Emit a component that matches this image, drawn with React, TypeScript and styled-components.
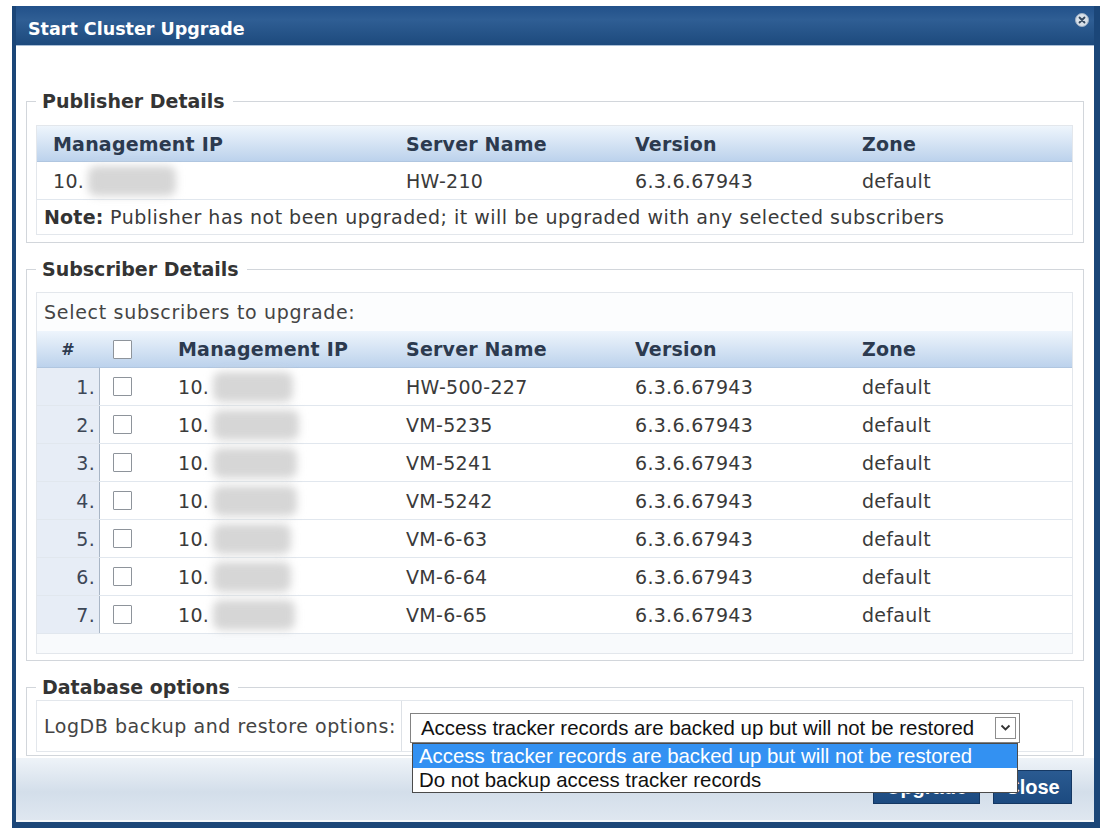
import React from 'react'
import styled, { createGlobalStyle } from 'styled-components'

const GlobalStyle = createGlobalStyle`
	body {
		margin: 0;
		background: #fff;
		font-family: "DejaVu Sans", Verdana, sans-serif;
	}
	* { box-sizing: border-box; }
`

type Subscriber = { ip: string, blur: number, name: string, version: string, zone: string }

const subscribers: Subscriber[] = [
	{ ip: '10.', blur: 80, name: 'HW-500-227', version: '6.3.6.67943', zone: 'default' },
	{ ip: '10.', blur: 86, name: 'VM-5235', version: '6.3.6.67943', zone: 'default' },
	{ ip: '10.', blur: 84, name: 'VM-5241', version: '6.3.6.67943', zone: 'default' },
	{ ip: '10.', blur: 84, name: 'VM-5242', version: '6.3.6.67943', zone: 'default' },
	{ ip: '10.', blur: 78, name: 'VM-6-63', version: '6.3.6.67943', zone: 'default' },
	{ ip: '10.', blur: 78, name: 'VM-6-64', version: '6.3.6.67943', zone: 'default' },
	{ ip: '10.', blur: 82, name: 'VM-6-65', version: '6.3.6.67943', zone: 'default' },
]

const CloseIcon = () => (
	<svg width="14" height="14" viewBox="0 0 14 14">
		<circle cx="7" cy="7" r="6.5" fill="#d9e0e8" stroke="#9fb0c4" strokeWidth="1" />
		<path d="M4.5 4.5 L9.5 9.5 M9.5 4.5 L4.5 9.5" stroke="#33475e" strokeWidth="1.8" strokeLinecap="round" />
	</svg>
)

const Chevron = () => (
	<svg width="11" height="8" viewBox="0 0 11 8">
		<path d="M1.5 1.5 L5.5 5.5 L9.5 1.5" fill="none" stroke="#333" strokeWidth="1.8" />
	</svg>
)

export default function App() {
	return (
		<>
			<GlobalStyle />
			<Dialog>
				<TitleBar>
					<Title>Start Cluster Upgrade</Title>
					<CloseButton><CloseIcon /></CloseButton>
				</TitleBar>
				<Body>
					<Group $top={44} $pt={13} $pb={7}>
						<Legend>Publisher Details</Legend>
						<Panel>
							<PubRow $head>
								<Cell $pad={16}>Management IP</Cell>
								<Cell>Server Name</Cell>
								<Cell>Version</Cell>
								<Cell>Zone</Cell>
							</PubRow>
							<PubRow>
								<Cell $pad={16}>10.<Blur $w={88} /></Cell>
								<Cell>HW-210</Cell>
								<Cell>6.3.6.67943</Cell>
								<Cell>default</Cell>
							</PubRow>
							<Note><b>Note:</b> Publisher has not been upgraded; it will be upgraded with any selected subscribers</Note>
						</Panel>
					</Group>

					<Group $top={15} $pt={12} $pb={6}>
						<Legend>Subscriber Details</Legend>
						<Panel>
							<Caption>Select subscribers to upgrade:</Caption>
							<SubRow $head>
								<NumCell $head>#</NumCell>
								<CheckCell><Checkbox /></CheckCell>
								<Cell $pad={16}>Management IP</Cell>
								<Cell>Server Name</Cell>
								<Cell>Version</Cell>
								<Cell>Zone</Cell>
							</SubRow>
							{subscribers.map((s, i) => (
								<SubRow key={i}>
									<NumCell>{i + 1}.</NumCell>
									<CheckCell><Checkbox /></CheckCell>
									<Cell $pad={16}>{s.ip}<Blur $w={s.blur} /></Cell>
									<Cell>{s.name}</Cell>
									<Cell>{s.version}</Cell>
									<Cell>{s.zone}</Cell>
								</SubRow>
							))}
							<EmptyRow />
						</Panel>
					</Group>

					<Group $top={15} $pt={2} $pb={3}>
						<Legend>Database options</Legend>
						<OptionsPanel>
							<OptionLabel>LogDB backup and restore options:</OptionLabel>
							<OptionField>
								<SelectWrap>
									<SelectBox>
										<span>Access tracker records are backed up but will not be restored</span>
										<ArrowBox><Chevron /></ArrowBox>
									</SelectBox>
									<DropList>
										<DropOption $selected>Access tracker records are backed up but will not be restored</DropOption>
										<DropOption>Do not backup access tracker records</DropOption>
									</DropList>
								</SelectWrap>
							</OptionField>
						</OptionsPanel>
					</Group>

					<Footer>
						<Button $w={107}>Upgrade</Button>
						<Button $w={79}>Close</Button>
					</Footer>
				</Body>
			</Dialog>
		</>
	)
}

const Dialog = styled.div`
	margin: 6px 0 0 12px;
	width: 1088px;
	height: 822px;
	display: flex;
	flex-direction: column;
	background: #1b4678;
	padding: 0 6px 6px 4px;
`

const TitleBar = styled.div`
	height: 40px;
	flex: none;
	display: flex;
	align-items: center;
	justify-content: space-between;
	padding: 0 5px 0 12px;
	background: linear-gradient(#22518a 0%, #2f5e94 35%, #1d4a7d 100%);
	border-bottom: 1px solid #a9bed6;
`

const Title = styled.div`
	color: #fff;
	font-weight: bold;
	font-size: 17.5px;
	padding-top: 6px;
`

const CloseButton = styled.div`
	align-self: flex-start;
	margin-top: 7px;
	display: flex;
`

const Body = styled.div`
	flex: 1;
	display: flex;
	flex-direction: column;
	background: #fff;
`

const Group = styled.fieldset<{ $top: number, $pt: number, $pb: number }>`
	margin: ${p => p.$top}px 10px 0 10px;
	padding: ${p => p.$pt}px 10px ${p => p.$pb}px 9px;
	border: 1px solid #d2d6db;
	min-inline-size: 0;
`

const Legend = styled.legend`
	padding: 0 8px 0 6px;
	font-weight: bold;
	font-size: 19px;
	line-height: 22px;
	color: #343434;
`

const Panel = styled.div`
	border: 1px solid #e3e7ec;
	background: #fff;
	font-size: 19px;
	letter-spacing: 0.3px;
	color: #3a3a3a;
`

const PubRow = styled.div<{ $head?: boolean }>`
	display: grid;
	grid-template-columns: 352px 229px 227px 1fr;
	align-items: center;
	height: ${p => (p.$head ? 36 : 38)}px;
	font-weight: ${p => (p.$head ? 'bold' : 'normal')};
	color: ${p => (p.$head ? '#2c3a4f' : '#3a3a3a')};
	background: ${p => (p.$head ? 'linear-gradient(#eef5fc, #bcd2ec)' : '#fff')};
	border-bottom: 1px solid ${p => (p.$head ? '#b0c6e0' : '#e1e7ee')};
	letter-spacing: ${p => (p.$head ? '0.2px' : '0.3px')};
`

const Cell = styled.div<{ $pad?: number }>`
	display: flex;
	align-items: center;
	padding-left: ${p => p.$pad ?? 17}px;
	white-space: nowrap;
`

const Blur = styled.span<{ $w: number }>`
	display: inline-block;
	width: ${p => p.$w}px;
	height: 30px;
	margin-left: 4px;
	border-radius: 8px;
	background: #d6d6d6;
	filter: blur(4px);
`

const Note = styled.div`
	height: 34px;
	line-height: 34px;
	padding-left: 7px;
	white-space: nowrap;
	letter-spacing: 0.5px;
	b { color: #333; letter-spacing: 0.2px; }
`

const Caption = styled.div`
	height: 38px;
	display: flex;
	align-items: center;
	padding-left: 7px;
	color: #444;
	letter-spacing: 0.7px;
	background: #fcfdfe;
`

const SubRow = styled.div<{ $head?: boolean }>`
	display: grid;
	grid-template-columns: 63px 62px 227px 229px 227px 1fr;
	align-items: stretch;
	height: ${p => (p.$head ? 37 : 38)}px;
	font-weight: ${p => (p.$head ? 'bold' : 'normal')};
	color: ${p => (p.$head ? '#2c3a4f' : '#3a3a3a')};
	background: ${p => (p.$head ? 'linear-gradient(#eef5fc, #bcd2ec)' : '#fff')};
	border-bottom: 1px solid ${p => (p.$head ? '#b0c6e0' : '#e1e7ee')};
	letter-spacing: ${p => (p.$head ? '0.2px' : '0.3px')};
`

const NumCell = styled.div<{ $head?: boolean }>`
	display: flex;
	align-items: center;
	justify-content: ${p => (p.$head ? 'center' : 'flex-end')};
	padding-right: ${p => (p.$head ? 0 : 4)}px;
	background: ${p => (p.$head ? 'transparent' : '#e7edf6')};
	border-right: 1px solid ${p => (p.$head ? 'transparent' : '#a9b6c6')};
	color: ${p => (p.$head ? '#2c3a4f' : '#3d4756')};
	font-size: ${p => (p.$head ? 16 : 19)}px;
`

const CheckCell = styled.div`
	display: flex;
	align-items: center;
	padding-left: 13px;
`

const Checkbox = styled.span`
	display: block;
	width: 19px;
	height: 19px;
	border: 1px solid #8e949b;
	border-radius: 1px;
	background: #fff;
`

const EmptyRow = styled.div`
	height: 19px;
	background: #f8fafc;
`

const OptionsPanel = styled.div`
	display: grid;
	grid-template-columns: 365px 1fr;
	height: 52px;
	border: 1px solid #e3e7ec;
	font-size: 19px;
	letter-spacing: 0.55px;
	color: #444;
`

const OptionLabel = styled.div`
	display: flex;
	align-items: center;
	padding-left: 7px;
	border-right: 1px solid #dde1e6;
	white-space: nowrap;
`

const OptionField = styled.div`
	display: flex;
	align-items: center;
	padding: 4px 0 0 8px;
`

const SelectWrap = styled.div`
	position: relative;
	z-index: 5;
`

const SelectBox = styled.div`
	width: 610px;
	height: 30px;
	display: flex;
	align-items: center;
	justify-content: space-between;
	padding: 0 3px 0 10px;
	border: 1px solid #828282;
	background: #fff;
	font-family: "Liberation Sans", Arial, sans-serif;
	font-size: 20.4px;
	letter-spacing: 0;
	color: #111;
	white-space: nowrap;
`

const ArrowBox = styled.span`
	width: 21px;
	height: 22px;
	display: flex;
	align-items: center;
	justify-content: center;
	border: 1px solid #8d8d8d;
	background: #fff;
`

const DropList = styled.div`
	position: absolute;
	top: 100%;
	left: 2px;
	width: 606px;
	border: 1px solid #4a4a4a;
	background: #fff;
	font-family: "Liberation Sans", Arial, sans-serif;
	font-size: 20.4px;
	letter-spacing: 0;
	white-space: nowrap;
`

const DropOption = styled.div<{ $selected?: boolean }>`
	height: 24px;
	line-height: 24px;
	padding-left: 6px;
	background: ${p => (p.$selected ? '#3391f2' : '#fff')};
	color: ${p => (p.$selected ? '#fff' : '#111')};
`

const Footer = styled.div`
	flex: 1;
	display: flex;
	justify-content: flex-end;
	align-items: flex-end;
	gap: 13px;
	margin-top: 2px;
	padding: 0 22px 16px 0;
	background: linear-gradient(#eef3f8 0%, #d3deea 55%, #dfe7f0 100%);
	border-bottom: 2px solid #f4f7fa;
`

const Button = styled.button<{ $w: number }>`
	width: ${p => p.$w}px;
	height: 34px;
	border: 1px solid #153863;
	background: linear-gradient(#2a5a91, #1c4a80);
	color: #fff;
	font-family: "Liberation Sans", Arial, sans-serif;
	font-weight: bold;
	font-size: 20px;
	padding: 0;
`
